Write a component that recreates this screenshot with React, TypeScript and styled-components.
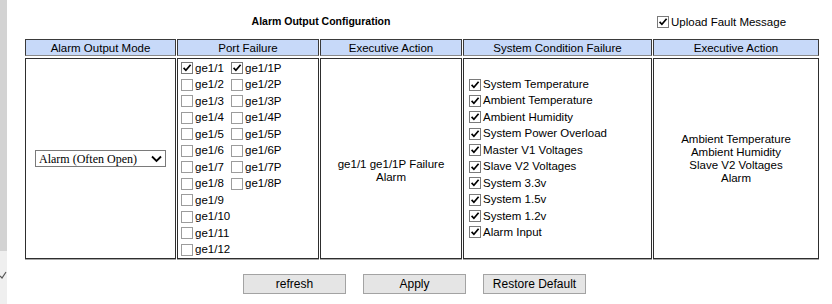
import { useState } from "react";
import styled, { createGlobalStyle } from "styled-components";

const GlobalStyle = createGlobalStyle`
  html, body {
    margin: 0;
    padding: 0;
    background: #fff;
  }
  body {
    font-family: "Liberation Sans", Arial, sans-serif;
    color: #000;
  }
`;

const PORTS: [string, string | null][] = [
  ["ge1/1", "ge1/1P"],
  ["ge1/2", "ge1/2P"],
  ["ge1/3", "ge1/3P"],
  ["ge1/4", "ge1/4P"],
  ["ge1/5", "ge1/5P"],
  ["ge1/6", "ge1/6P"],
  ["ge1/7", "ge1/7P"],
  ["ge1/8", "ge1/8P"],
  ["ge1/9", null],
  ["ge1/10", null],
  ["ge1/11", null],
  ["ge1/12", null],
];

const CONDITIONS = [
  "System Temperature",
  "Ambient Temperature",
  "Ambient Humidity",
  "System Power Overload",
  "Master V1 Voltages",
  "Slave V2 Voltages",
  "System 3.3v",
  "System 1.5v",
  "System 1.2v",
  "Alarm Input",
];

// 체크박스 (옛날 윈도우 스타일)
function Check({
  label,
  initial,
  size = 11.5,
}: {
  label: string;
  initial: boolean;
  size?: number;
}) {
  const [checked, setChecked] = useState(initial);

  return (
    <CheckLabel $size={size}>
      <HiddenInput
        type="checkbox"
        checked={checked}
        onChange={() => setChecked(!checked)}
      />
      <Box $checked={checked}>
        {checked && (
          <svg width="10" height="10" viewBox="0 0 10 10">
            <path
              d="M1.6 4.9 L3.9 7.3 L8.6 1.8"
              fill="none"
              stroke="#000"
              strokeWidth="1.7"
            />
          </svg>
        )}
      </Box>
      <span>{label}</span>
    </CheckLabel>
  );
}

function App() {
  return (
    <>
      <GlobalStyle />
      <Page>
        <SideStrip>
          <StripTop />
          <StripBottom>
            <svg width="7" height="12" viewBox="0 0 7 12">
              <path d="M0 8 L2 10 L6 4" fill="none" stroke="#555" strokeWidth="1.2" />
            </svg>
          </StripBottom>
        </SideStrip>

        <Main>
          <TopBar>
            <Title>Alarm Output Configuration</Title>
            <UploadWrap>
              <Check label="Upload Fault Message" initial={true} />
            </UploadWrap>
          </TopBar>

          <ConfigGrid>
            <HeadCell>Alarm Output Mode</HeadCell>
            <HeadCell>Port Failure</HeadCell>
            <HeadCell>Executive Action</HeadCell>
            <HeadCell>System Condition Failure</HeadCell>
            <HeadCell>Executive Action</HeadCell>

            <ModeCell>
              <SelectWrap>
                <ModeSelect defaultValue="open">
                  <option value="open">Alarm (Often Open)</option>
                  <option value="close">Alarm (Often Close)</option>
                </ModeSelect>
                <Chevron width="11" height="8" viewBox="0 0 11 8">
                  <path d="M1 1.5 L5.5 6 L10 1.5" fill="none" stroke="#000" strokeWidth="1.8" />
                </Chevron>
              </SelectWrap>
            </ModeCell>

            <PortCell>
              <PortGrid>
                {PORTS.map(([a, b], i) => (
                  <PortRow key={a}>
                    <Check label={a} initial={i === 0} />
                    {b && <Check label={b} initial={i === 0} />}
                  </PortRow>
                ))}
              </PortGrid>
            </PortCell>

            <ActionCell $offset={24}>
              ge1/1 ge1/1P Failure
              <br />
              Alarm
            </ActionCell>

            <ConditionCell>
              {CONDITIONS.map((c) => (
                <ConditionRow key={c}>
                  <Check label={c} initial={true} />
                </ConditionRow>
              ))}
            </ConditionCell>

            <ActionCell $offset={0}>
              Ambient Temperature
              <br />
              Ambient Humidity
              <br />
              Slave V2 Voltages
              <br />
              Alarm
            </ActionCell>
          </ConfigGrid>

          <ButtonRow>
            <ActionButton type="button">refresh</ActionButton>
            <ActionButton type="button">Apply</ActionButton>
            <ActionButton type="button">Restore Default</ActionButton>
          </ButtonRow>
        </Main>
      </Page>
    </>
  );
}

export default App;

const Page = styled.div`
  display: flex;
  width: 832px;
  height: 304px;
  overflow: hidden;
  background: #fff;
`;

const SideStrip = styled.div`
  display: flex;
  flex-direction: column;
  width: 7px;
  flex-shrink: 0;
`;

const StripTop = styled.div`
  height: 251px;
  background: #d3d3d3;
`;

const StripBottom = styled.div`
  flex: 1;
  background: #efefef;
  padding-top: 17px;

  svg {
    display: block;
  }
`;

const Main = styled.div`
  flex: 1;
  padding: 6px 0 0 18px;
`;

const TopBar = styled.div`
  display: flex;
  align-items: center;
  height: 30px;
  margin-bottom: 3px;
`;

const Title = styled.div`
  width: 592px;
  text-align: center;
  font-size: 10.5px;
  font-weight: bold;
`;

const UploadWrap = styled.div`
  margin-left: 40px;
  padding-top: 2px;
`;

const CheckLabel = styled.label<{ $size: number }>`
  display: flex;
  align-items: center;
  gap: 2px;
  font-size: ${({ $size }) => $size}px;
  line-height: 13px;
  white-space: nowrap;
  cursor: pointer;
`;

const HiddenInput = styled.input`
  position: absolute;
  opacity: 0;
  width: 0;
  height: 0;
  margin: 0;
`;

const Box = styled.span<{ $checked: boolean }>`
  display: flex;
  align-items: center;
  justify-content: center;
  width: 12px;
  height: 12px;
  box-sizing: border-box;
  border: 1px solid ${({ $checked }) => ($checked ? "#7a7a7a" : "#9c9c9c")};
  background: #fff;
  flex-shrink: 0;
`;

const ConfigGrid = styled.div`
  display: grid;
  grid-template-columns: 151px 142px 142px 189px 166px;
  grid-template-rows: 17px 201px;
  column-gap: 1px;
  row-gap: 2px;
  width: 795px;
`;

const HeadCell = styled.div`
  display: flex;
  align-items: center;
  justify-content: center;
  box-sizing: border-box;
  background: #c7d9f9;
  border: 1px solid #3a3a3a;
  border-bottom-color: #8a8a8a;
  font-size: 11.5px;
`;

const BodyCell = styled.div`
  box-sizing: border-box;
  border: 1px solid #2e2e2e;
  box-shadow: 0 1px 0 #a8a8a8;
  background: #fff;
  font-size: 11.5px;
`;

const ModeCell = styled(BodyCell)`
  display: flex;
  align-items: center;
  justify-content: center;
`;

const SelectWrap = styled.div`
  position: relative;
  width: 131px;
  height: 17px;
`;

const ModeSelect = styled.select`
  appearance: none;
  width: 100%;
  height: 100%;
  margin: 0;
  padding: 0 0 0 3px;
  box-sizing: border-box;
  border: 1px solid #7a7a7a;
  border-radius: 0;
  background: #fff;
  font-family: "Liberation Serif", "Times New Roman", serif;
  font-size: 12px;
  color: #000;
  outline: none;
`;

const Chevron = styled.svg`
  position: absolute;
  right: 4px;
  top: 5px;
  pointer-events: none;
`;

const PortCell = styled(BodyCell)`
  padding: 1px 0 0 3px;
`;

const PortGrid = styled.div`
  display: grid;
  grid-auto-rows: 16.5px;
`;

const PortRow = styled.div`
  display: grid;
  grid-template-columns: 50px auto;
  align-items: center;
`;

const ActionCell = styled(BodyCell)<{ $offset: number }>`
  display: flex;
  align-items: center;
  justify-content: center;
  padding-top: ${({ $offset }) => $offset}px;
  text-align: center;
  line-height: 13px;
`;

const ConditionCell = styled(BodyCell)`
  display: flex;
  flex-direction: column;
  justify-content: center;
  padding-left: 5px;
`;

const ConditionRow = styled.div`
  display: flex;
  align-items: center;
  height: 16.45px;
`;

const ButtonRow = styled.div`
  display: flex;
  gap: 17px;
  margin-top: 15px;
  padding-left: 218px;
`;

const ActionButton = styled.button`
  width: 103px;
  height: 20px;
  padding: 0;
  box-sizing: border-box;
  border: 1px solid #a3a3a3;
  border-radius: 0;
  background: #e5e5e5;
  font-family: "Liberation Sans", Arial, sans-serif;
  font-size: 12px;
  color: #000;
  cursor: pointer;
`;
